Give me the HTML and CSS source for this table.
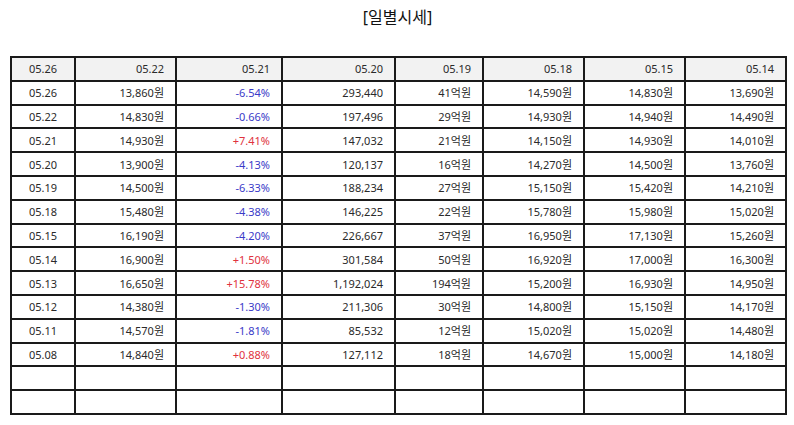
FILE: index.html
```html
<!DOCTYPE html>
<html lang="ko">
<head>
<meta charset="utf-8">
<link rel="stylesheet" href="styles.css">
</head>
<body>
<div class="page">
  <div class="title">[일별시세]</div>
  <table class="grid">
    <colgroup>
      <col class="c1"><col class="c2"><col class="c3"><col class="c4"><col class="c5"><col class="c6"><col class="c7"><col class="c8">
    </colgroup>
    <thead>
      <tr><th class="ctr">05.26</th><th>05.22</th><th>05.21</th><th>05.20</th><th>05.19</th><th>05.18</th><th>05.15</th><th>05.14</th></tr>
    </thead>
    <tbody>
      <tr><td class="ctr">05.26</td><td>13,860원</td><td class="dn">-6.54%</td><td>293,440</td><td>41억원</td><td>14,590원</td><td>14,830원</td><td>13,690원</td></tr>
      <tr><td class="ctr">05.22</td><td>14,830원</td><td class="dn">-0.66%</td><td>197,496</td><td>29억원</td><td>14,930원</td><td>14,940원</td><td>14,490원</td></tr>
      <tr><td class="ctr">05.21</td><td>14,930원</td><td class="up">+7.41%</td><td>147,032</td><td>21억원</td><td>14,150원</td><td>14,930원</td><td>14,010원</td></tr>
      <tr><td class="ctr">05.20</td><td>13,900원</td><td class="dn">-4.13%</td><td>120,137</td><td>16억원</td><td>14,270원</td><td>14,500원</td><td>13,760원</td></tr>
      <tr><td class="ctr">05.19</td><td>14,500원</td><td class="dn">-6.33%</td><td>188,234</td><td>27억원</td><td>15,150원</td><td>15,420원</td><td>14,210원</td></tr>
      <tr><td class="ctr">05.18</td><td>15,480원</td><td class="dn">-4.38%</td><td>146,225</td><td>22억원</td><td>15,780원</td><td>15,980원</td><td>15,020원</td></tr>
      <tr><td class="ctr">05.15</td><td>16,190원</td><td class="dn">-4.20%</td><td>226,667</td><td>37억원</td><td>16,950원</td><td>17,130원</td><td>15,260원</td></tr>
      <tr><td class="ctr">05.14</td><td>16,900원</td><td class="up">+1.50%</td><td>301,584</td><td>50억원</td><td>16,920원</td><td>17,000원</td><td>16,300원</td></tr>
      <tr><td class="ctr">05.13</td><td>16,650원</td><td class="up">+15.78%</td><td>1,192,024</td><td>194억원</td><td>15,200원</td><td>16,930원</td><td>14,950원</td></tr>
      <tr><td class="ctr">05.12</td><td>14,380원</td><td class="dn">-1.30%</td><td>211,306</td><td>30억원</td><td>14,800원</td><td>15,150원</td><td>14,170원</td></tr>
      <tr><td class="ctr">05.11</td><td>14,570원</td><td class="dn">-1.81%</td><td>85,532</td><td>12억원</td><td>15,020원</td><td>15,020원</td><td>14,480원</td></tr>
      <tr><td class="ctr">05.08</td><td>14,840원</td><td class="up">+0.88%</td><td>127,112</td><td>18억원</td><td>14,670원</td><td>15,000원</td><td>14,180원</td></tr>
      <tr><td></td><td></td><td></td><td></td><td></td><td></td><td></td><td></td></tr>
      <tr><td></td><td></td><td></td><td></td><td></td><td></td><td></td><td></td></tr>
    </tbody>
  </table>
</div>
</body>
</html>
```

FILE: styles.css
```css
html, body {
  margin: 0;
  padding: 0;
  background: #fff;
}

.page {
  padding: 0 9px 0 10px;
  font-family: "Noto Sans", "Noto Sans CJK KR", sans-serif;
  color: #2a2a2a;
}

.title {
  text-align: center;
  font-size: 16px;
  line-height: 34px;
  height: 34px;
  margin-bottom: 22px;
  color: #111;
}

.grid {
  width: 775px;
  border-collapse: collapse;
  table-layout: fixed;
  font-size: 11px;
}

.c1 { width: 64px; }
.c2 { width: 101px; }
.c3 { width: 106px; }
.c4 { width: 113px; }
.c5 { width: 88px; }
.c6 { width: 101px; }
.c7 { width: 101px; }
.c8 { width: 101px; }

.grid th,
.grid td {
  border: 2px solid #1a1a1a;
  height: 21.8px;
  padding: 0 11px 0 4px;
  text-align: right;
  font-weight: normal;
  white-space: nowrap;
  line-height: 1;
}

.grid th {
  background: #f2f2f2;
}

.grid .ctr {
  text-align: center;
  padding: 0;
}

.grid .dn { color: #3a3ac8; }
.grid .up { color: #e0323e; }
```
